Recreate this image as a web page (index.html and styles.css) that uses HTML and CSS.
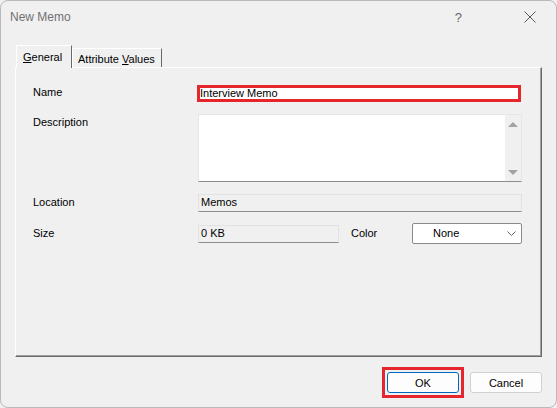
FILE: index.html
```html
<!DOCTYPE html>
<html lang="en">
<head>
    <meta charset="UTF-8">
    <title>New Memo</title>
    <link rel="stylesheet" href="styles.css">
</head>
<body>
    <div class="window">
        <div class="titlebar">
            <span class="title">New Memo</span>
            <span class="help">?</span>
            <svg class="close" width="12" height="12" viewBox="0 0 12 12">
                <path d="M0.5 0.5 L11.5 11.5 M11.5 0.5 L0.5 11.5" stroke="#5a5a5a" stroke-width="1" fill="none"/>
            </svg>
        </div>

        <div class="tabs">
            <div class="tab active"><u>G</u>eneral</div>
            <div class="tab">Attribute <u>V</u>alues</div>
        </div>

        <div class="panel">
            <div class="row">
                <label class="label">Name</label>
                <div class="field name-field">Interview Memo</div>
            </div>

            <div class="row row-top">
                <label class="label">Description</label>
                <div class="textarea">
                    <div class="scrollbar">
                        <span class="arrow-up"></span>
                        <span class="arrow-down"></span>
                    </div>
                </div>
            </div>

            <div class="row">
                <label class="label">Location</label>
                <div class="field readonly wide">Memos</div>
            </div>

            <div class="row row-size">
                <label class="label">Size</label>
                <div class="field readonly short">0 KB</div>
                <label class="label color-label">Color</label>
                <div class="combo">
                    <span>None</span>
                    <svg width="9" height="5" viewBox="0 0 9 5">
                        <path d="M0.5 0.5 L4.5 4.5 L8.5 0.5" stroke="#666" stroke-width="1" fill="none"/>
                    </svg>
                </div>
            </div>
        </div>

        <div class="footer">
            <span class="focus-ring">
                <button class="btn btn-default">OK</button>
            </span>
            <button class="btn">Cancel</button>
        </div>
    </div>
</body>
</html>
```

FILE: styles.css
```css
body {
    margin: 0px;
    font-family: "Liberation Sans", Arial, sans-serif;
    font-size: 11px;
    color: #000;
    background-color: #f0f0f0;
}

.window {
    width: 557px;
    height: 408px;
    box-sizing: border-box;
    border: 1px solid #b9b9b9;
    border-radius: 8px;
    background-color: #f0f0f0;
    display: flex;
    flex-direction: column;
    overflow: hidden;
}

.titlebar {
    height: 32px;
    display: flex;
    align-items: center;
    padding-left: 9px;
    flex-shrink: 0;
}

.title {
    font-size: 12px;
    color: #707070;
    flex: 1;
}

.help {
    font-size: 13px;
    color: #666;
    margin-right: 62px;
}

.close {
    margin-right: 20px;
}

.tabs {
    display: flex;
    align-items: flex-end;
    margin-top: 12px;
    padding-left: 15px;
    height: 22px;
    position: relative;
    z-index: 1;
}

.tab {
    height: 19px;
    box-sizing: border-box;
    padding: 2px 6px 0 5px;
    border-top: 1px solid #fff;
    border-left: 1px solid #fff;
    border-right: 1px solid #696969;
    line-height: 16px;
}

.tab.active {
    height: 23px;
    width: 56px;
    padding: 3px 0 0 6px;
    margin-bottom: -1px;
    background-color: #f0f0f0;
}

.panel {
    margin-left: 14px;
    width: 527px;
    height: 290px;
    box-sizing: border-box;
    border-top: 1px solid #fff;
    border-left: 1px solid #fff;
    border-right: 1px solid #696969;
    border-bottom: 1px solid #696969;
    box-shadow: inset -1px -1px 0 #a0a0a0;
    padding: 16px 0 0 17px;
    display: flex;
    flex-direction: column;
    gap: 12px;
}

.row {
    display: flex;
    align-items: center;
}

.row-top {
    align-items: flex-start;
}

.row-size {
    margin-top: -1px;
}

.label {
    width: 165px;
    flex-shrink: 0;
    line-height: 16px;
    padding-bottom: 2px;
}

.row-top .label {
    padding-bottom: 0;
}

.field {
    height: 18px;
    box-sizing: border-box;
    line-height: 15px;
    padding-left: 2px;
}

.name-field {
    width: 324px;
    height: 17px;
    margin-left: -1px;
    border: 3px solid #e5262c;
    background-color: #fff;
    line-height: 10px;
    padding-left: 0px;
}

.readonly {
    border: 1px solid #e2e2e2;
    border-bottom-color: #8d8d8d;
    background-color: #f0f0f0;
}

.wide {
    width: 324px;
}

.short {
    width: 141px;
}

.textarea {
    width: 324px;
    height: 68px;
    box-sizing: border-box;
    background-color: #fff;
    border: 1px solid #e6e6e6;
    border-bottom-color: #8d8d8d;
    display: flex;
    justify-content: flex-end;
}

.scrollbar {
    width: 16px;
    background-color: #f0f0f0;
    display: flex;
    flex-direction: column;
    justify-content: space-between;
    align-items: center;
    padding: 7px 0 6px 0;
}

.arrow-up {
    width: 0;
    height: 0;
    border-left: 5px solid transparent;
    border-right: 5px solid transparent;
    border-bottom: 5px solid #a3a3a3;
}

.arrow-down {
    width: 0;
    height: 0;
    border-left: 5px solid transparent;
    border-right: 5px solid transparent;
    border-top: 5px solid #a3a3a3;
}

.color-label {
    width: 61px;
    margin-left: 12px;
}

.combo {
    width: 110px;
    height: 21px;
    box-sizing: border-box;
    background-color: #fff;
    border: 1px solid #8a8a8a;
    border-radius: 2px;
    display: flex;
    align-items: center;
    justify-content: space-between;
    padding: 0 5px 1px 20px;
}

.footer {
    display: flex;
    justify-content: flex-end;
    align-items: center;
    gap: 6px;
    padding-right: 14px;
    margin-top: 10px;
}

.focus-ring {
    display: flex;
    border: 3px solid #e5262c;
    padding: 2px;
}

.btn {
    width: 72px;
    height: 21px;
    box-sizing: border-box;
    background-color: #fdfdfd;
    border: 1px solid #d0d0d0;
    border-radius: 3px;
    font-family: "Liberation Sans", Arial, sans-serif;
    font-size: 11px;
    color: #000;
    padding: 0;
}

.btn-default {
    border-color: #0067c0;
}
```
